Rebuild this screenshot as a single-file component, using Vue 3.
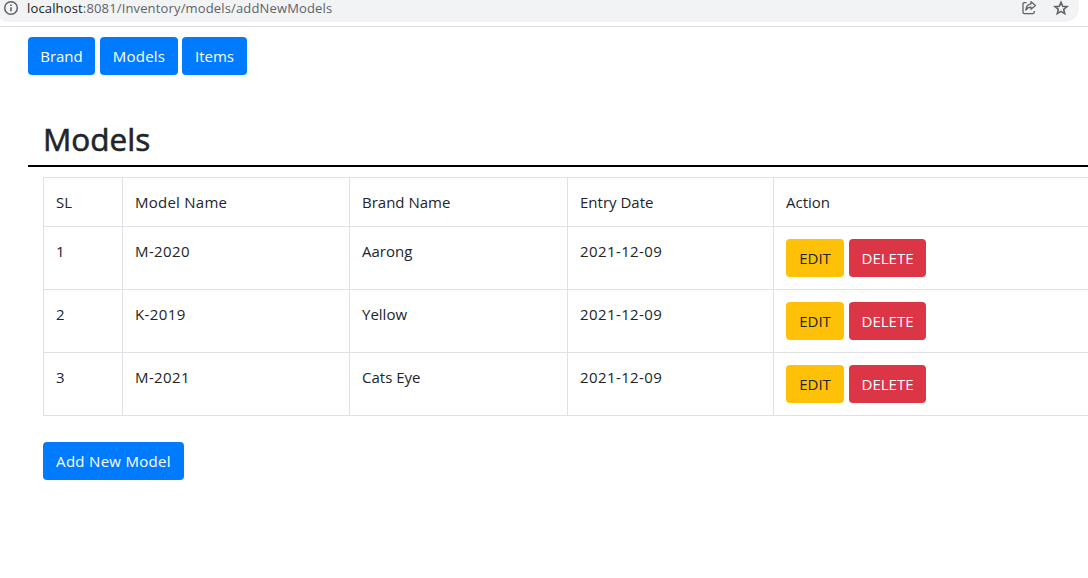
<script setup>
const nav = [
  { label: 'Brand', cls: 'w-brand' },
  { label: 'Models', cls: 'w-models' },
  { label: 'Items', cls: 'w-items' },
]
const rows = [
  { sl: 1, model: 'M-2020', brand: 'Aarong', date: '2021-12-09' },
  { sl: 2, model: 'K-2019', brand: 'Yellow', date: '2021-12-09' },
  { sl: 3, model: 'M-2021', brand: 'Cats Eye', date: '2021-12-09' },
]
</script>

<template>
  <div class="page">
    <header class="chrome">
      <div class="omnibox">
        <svg class="info" width="16" height="16" viewBox="0 0 16 16">
          <circle cx="8" cy="8" r="6.3" fill="none" stroke="#5f6368" stroke-width="1.5" />
          <path d="M8 7.2v4.1M8 4.5v1.5" stroke="#5f6368" stroke-width="1.6" />
        </svg>
        <span class="url"><span class="host">localhost</span>:8081/Inventory/models/addNewModels</span>
        <svg class="share" width="16" height="16" viewBox="0 0 16 16" fill="none" stroke="#5f6368" stroke-width="1.3" stroke-linejoin="round">
          <path d="M5.5 2.6H3.4Q2 2.6 2 4v8.200Q2 13.600 3.400 13.600h8.400q1.400 0 1.400-1.400V11" />
          <path d="M10 1.7 14.400 5.500 10 9.200V7.100Q6.500 7.100 4.800 10.100 5.300 4.500 10 3.900Z" />
        </svg>
        <svg class="star" width="16" height="16" viewBox="0 0 16 16" fill="none" stroke="#5f6368" stroke-width="1.6">
          <path d="m8 2.200 1.700 4 4.300.4-3.300 2.800 1 4.200L8 11.400l-3.700 2.200 1-4.200L2 6.600l4.300-.4Z" />
        </svg>
      </div>
    </header>

    <nav class="nav">
      <button v-for="n in nav" :key="n.label" class="btn primary" :class="n.cls">{{ n.label }}</button>
    </nav>

    <main class="content">
      <h2>Models</h2>
      <table>
        <colgroup>
          <col class="c-sl" /><col class="c-model" /><col class="c-brand" /><col class="c-date" /><col />
        </colgroup>
        <tbody>
          <tr class="head">
            <td>SL</td>
            <td class="name">Model Name</td>
            <td>Brand Name</td>
            <td>Entry Date</td>
            <td>Action</td>
          </tr>
          <tr v-for="r in rows" :key="r.sl">
            <td>{{ r.sl }}</td>
            <td class="code">{{ r.model }}</td>
            <td>{{ r.brand }}</td>
            <td class="code">{{ r.date }}</td>
            <td>
              <div class="actions">
                <button class="btn warning">EDIT</button>
                <button class="btn danger">DELETE</button>
              </div>
            </td>
          </tr>
        </tbody>
      </table>
      <button class="btn primary add">Add New Model</button>
    </main>
  </div>
</template>

<style>
body { margin: 0; background: #fff; overflow: hidden; }
</style>

<style scoped>
* { box-sizing: border-box; }
.page {
  width: 1088px;
  height: 578px;
  overflow: hidden;
  background: #fff;
  color: #212529;
  font: 400 15px/24px "Segoe UI", "Open Sans", sans-serif;
}
.chrome { height: 27px; border-bottom: 1px solid #dadce0; }
.omnibox {
  display: flex;
  width: 1079px;
  height: 22px;
  padding-left: 3px;
  background: #f1f3f4;
  border-radius: 0 0 14px 6px;
}
svg { display: block; flex: none; }
.url {
  margin-left: 8px;
  font-size: 13px;
  line-height: 17px;
  letter-spacing: 0.15px;
  color: #5f6368;
  white-space: nowrap;
}
.host { color: #202124; }
.share { margin-left: auto; }
.star { margin: 0 10px 0 16px; }
.nav { display: flex; padding: 10px 0 0 28px; }
.btn {
  height: 38px;
  padding: 0;
  border: 0;
  border-radius: 4px;
  font: inherit;
  color: #fff;
  white-space: nowrap;
}
.primary { background: #007bff; }
.w-brand { width: 67px; margin-right: 5px; }
.w-models { width: 78px; margin-right: 4px; letter-spacing: 0.25px; }
.w-items { width: 65px; }
.content { padding-left: 28px; }
h2 {
  height: 52px;
  margin: 40px 0 10px;
  padding-left: 15px;
  border-bottom: 2px solid #000;
  font-size: 31.5px;
  font-weight: 500;
  line-height: 48px;
  -webkit-text-stroke: 0.6px #212529;
}
table {
  width: 1100px;
  margin-left: 15px;
  table-layout: fixed;
  border-collapse: collapse;
}
.c-sl { width: 79px; }
.c-model { width: 227px; }
.c-brand { width: 218px; }
.c-date { width: 206px; }
td {
  height: 63px;
  padding: 12px;
  border: 1px solid #dee2e6;
  vertical-align: top;
}
.head td { height: 49px; }
.name { letter-spacing: 0.25px; }
.code { letter-spacing: 0.4px; }
.actions { display: flex; gap: 5px; }
.warning { width: 58px; background: #ffc107; color: #212529; }
.danger { width: 77px; background: #dc3545; }
.add { display: block; width: 141px; margin: 26px 0 0 15px; letter-spacing: 0.3px; }
</style>
